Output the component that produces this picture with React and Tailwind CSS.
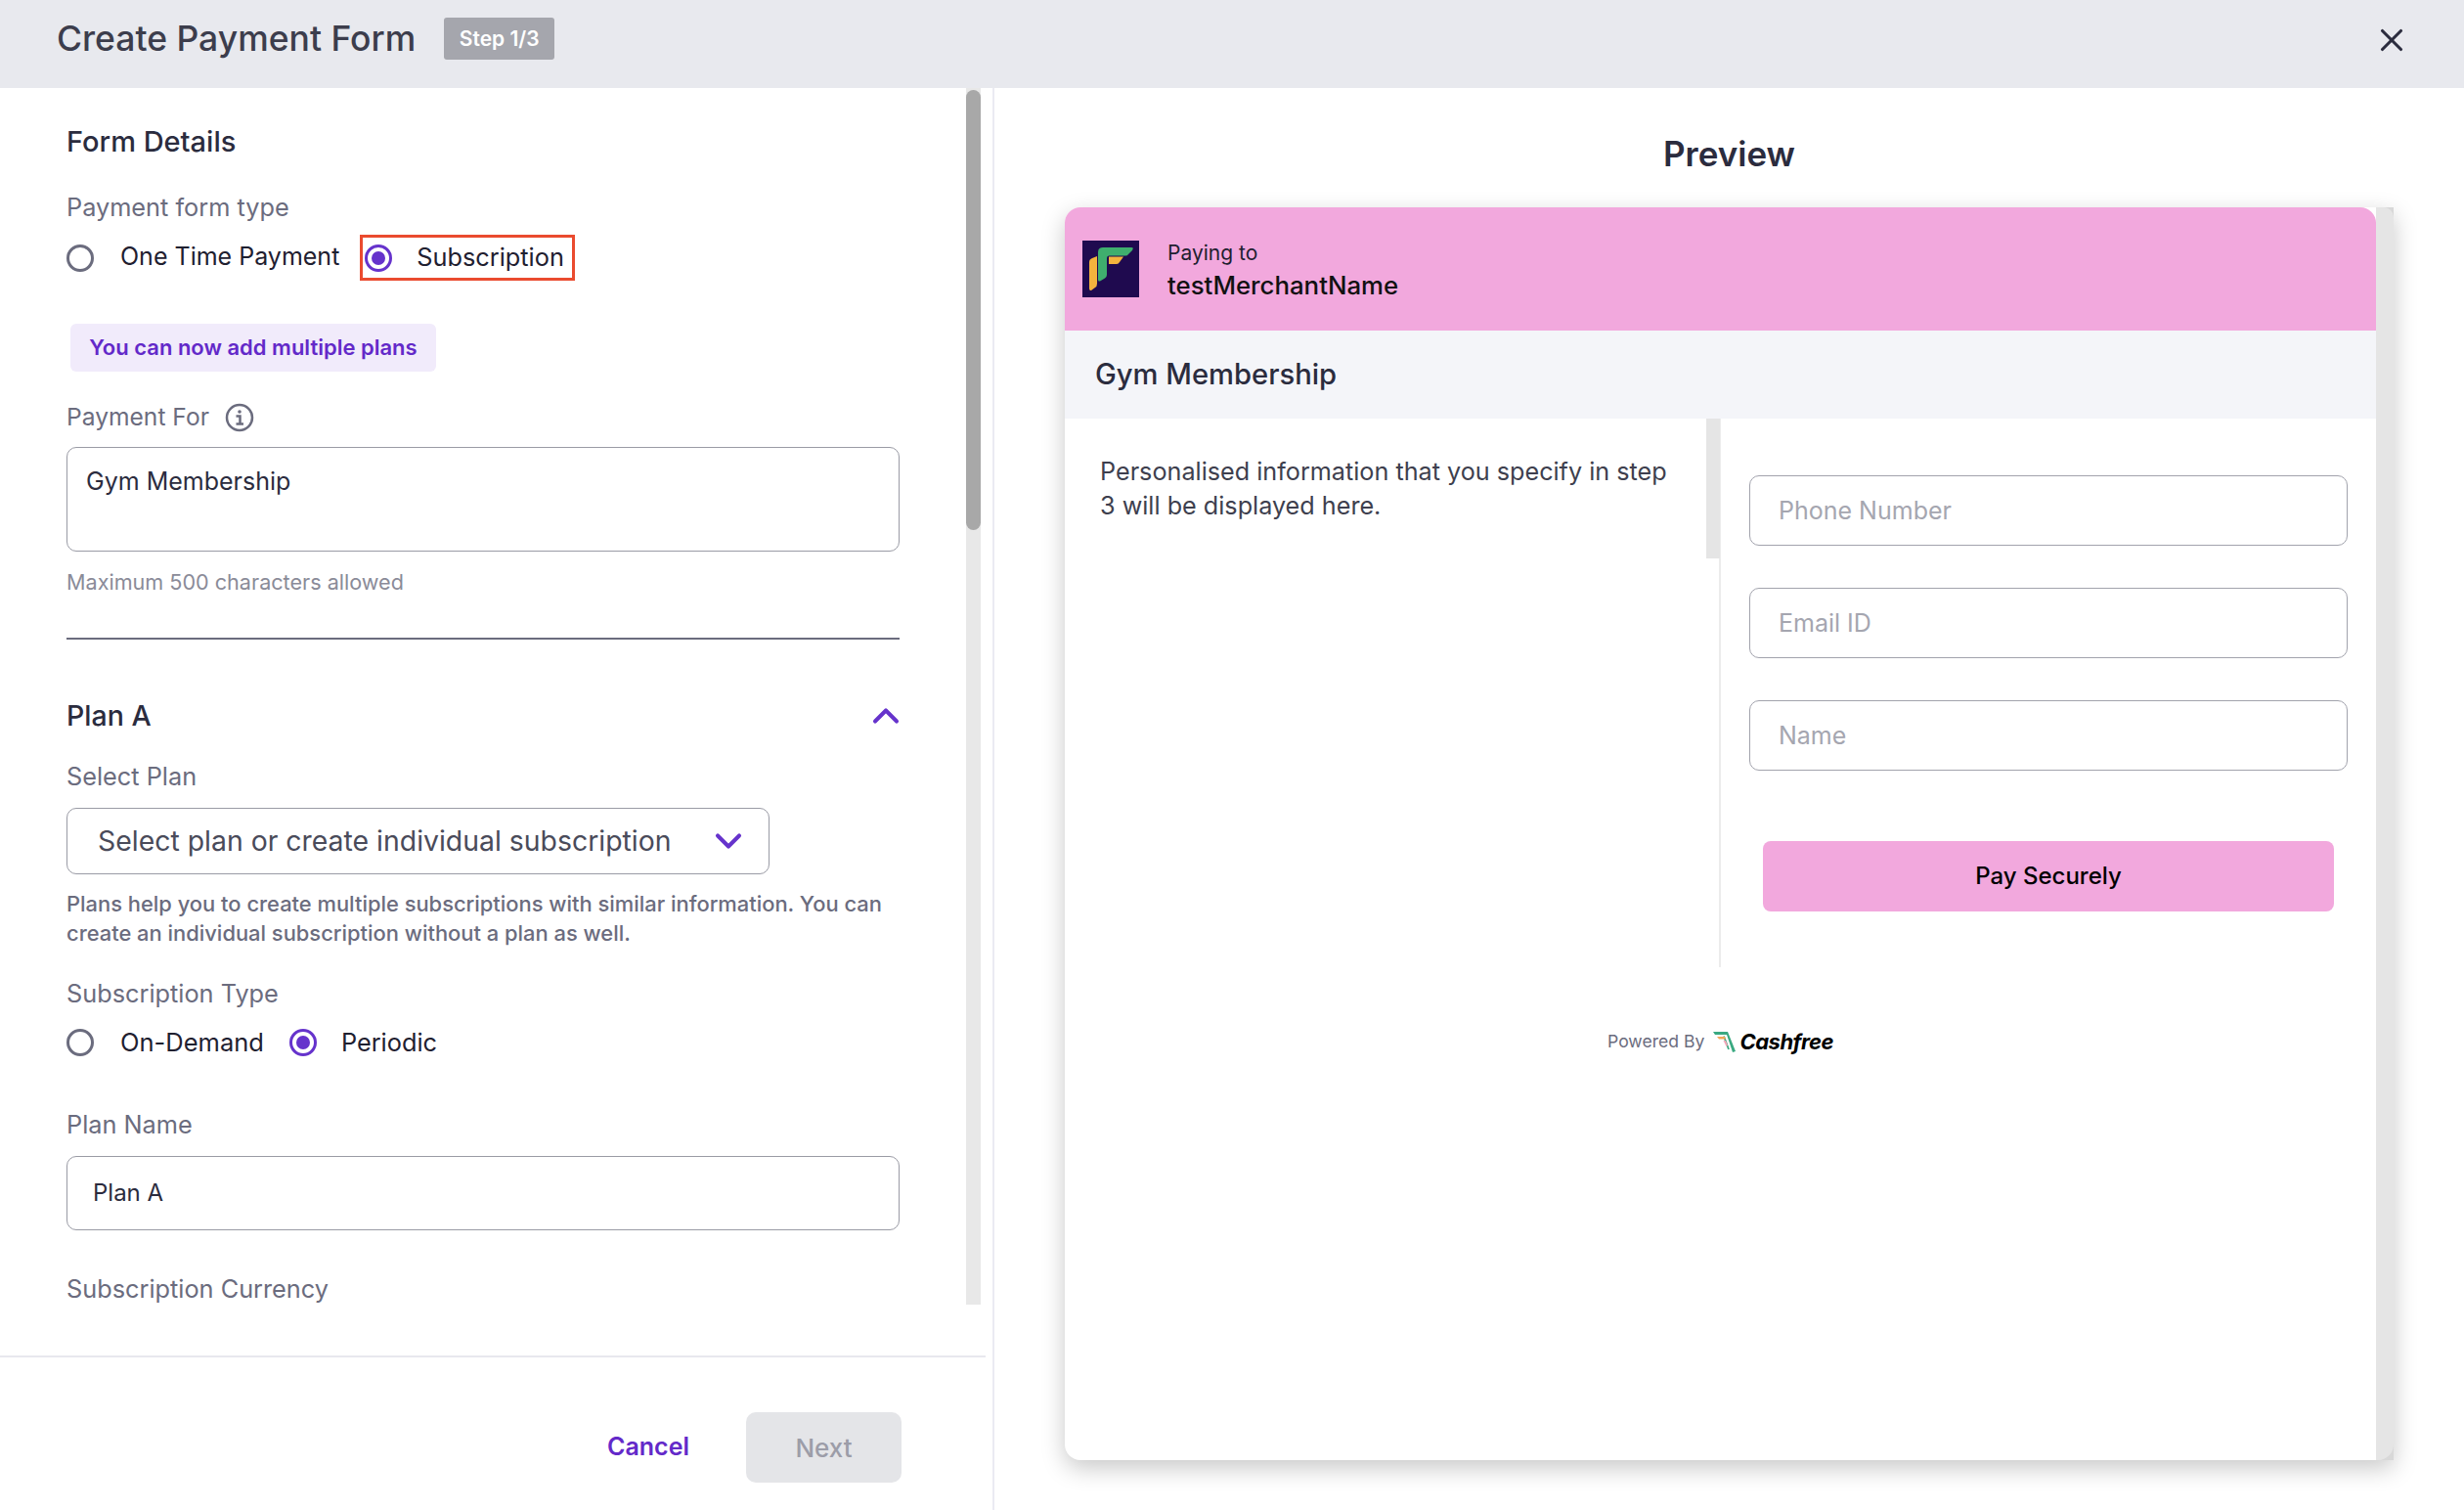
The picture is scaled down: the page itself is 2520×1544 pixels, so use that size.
import React from 'react';
import { X, ChevronUp, ChevronDown } from 'lucide-react';

const font = { fontFamily: 'Inter, "Liberation Sans", sans-serif' };

function Radio({ checked }) {
  if (checked) {
    return (
      <span className="flex h-[28px] w-[28px] shrink-0 items-center justify-center rounded-full border-[3px] border-[#6633cc]">
        <span className="h-[14px] w-[14px] rounded-full bg-[#6633cc]" />
      </span>
    );
  }
  return <span className="h-[28px] w-[28px] shrink-0 rounded-full border-[3px] border-[#6b6c7e]" />;
}

function Label({ className, children }) {
  return <div className={`h-[36px] text-[25.3px] leading-[36px] text-[#6b6c7e] ${className}`}>{children}</div>;
}

function PreviewInput({ placeholder }) {
  return (
    <div className="flex h-[72px] w-[612px] items-center rounded-[10px] border border-[#a2a3ad] pl-[29px] pt-[2px] text-[25px] text-[#a5a6b0]">
      {placeholder}
    </div>
  );
}

function MerchantLogo() {
  return (
    <svg width="58" height="58" viewBox="0 0 58 58" className="shrink-0">
      <rect width="58" height="58" fill="#1f0a4f" />
      <path d="M21 7H50Q53 7 51 10L47 14Q46 15.5 44 15.5H27Q25 15.5 25 18V35Q25 37 23 38.5L18 41.5Q16 42 16 40V12Q16 7 21 7Z" fill="#3fae6e" />
      <path d="M27 16.5H42L38 22Q37 24 35 24H27Z" fill="#f4b33d" />
      <path d="M15 16V44Q15 47 13 48L9 51Q7 51.5 7 49V22Q7 19 10 18Z" fill="#f4b33d" />
    </svg>
  );
}

function CashfreeIcon() {
  return (
    <svg width="24" height="21" viewBox="0 0 24 21" fill="none" className="shrink-0">
      <path d="M0 0H15L23 20L20 21L14 3H2Z" fill="#3aa981" />
      <path d="M11 4.5L16 18" stroke="#3aa981" strokeWidth="1.8" />
      <path d="M4 5H12L13 7.5H6Z" fill="#f2a65a" />
      <path d="M10.5 9H13L15 14L13.5 15Z" fill="#f4a6b8" />
    </svg>
  );
}

export default function App() {
  return (
    <div className="flex h-[1544px] w-[2520px] flex-col overflow-hidden bg-white" style={font}>
      <header className="flex h-[90px] shrink-0 items-start bg-[#e8e9ee] pl-[58px] pr-[55px]">
        <h1 className="mt-[18px] text-[35.5px] font-medium leading-[44px] text-[#3c3d4c]">Create Payment Form</h1>
        <span className="ml-[29px] mt-[18px] flex h-[43px] w-[113px] items-center justify-center rounded-[3px] bg-[#a5a6ad] text-[21px] font-semibold text-white">
          Step 1/3
        </span>
        <X className="ml-auto mt-[22px] text-[#2b2c3e]" size={38} strokeWidth={2} />
      </header>

      <div className="flex min-h-0 flex-1">
        <section className="flex w-[1017px] shrink-0 flex-col border-r-2 border-[#ebebf3]">
          <div className="flex h-[1296px] shrink-0 overflow-hidden pr-[12px]">
            <div className="w-[988px] shrink-0 pl-[68px] pr-[68px] pt-[35px]">
              <h2 className="h-[40px] text-[29px] font-medium leading-[40px] text-[#2b2c3e]">Form Details</h2>
              <Label className="mt-[29px]">Payment form type</Label>
              <div className="mt-[10px] flex h-[47px] items-center">
                <Radio />
                <span className="mb-[2px] ml-[27px] text-[25px] text-[#1f2030]">One Time Payment</span>
                <div className="ml-[21px] flex h-[47px] w-[220px] items-center border-[3px] border-[#ea4b2f] pl-[2px]">
                  <Radio checked />
                  <span className="mb-[2px] ml-[25px] text-[25.3px] text-[#1f2030]">Subscription</span>
                </div>
              </div>
              <div className="ml-[4px] mt-[44px] flex h-[49px] w-[374px] items-center justify-center rounded-[6px] bg-[#f1ebfb] text-[22px] font-semibold text-[#6329c9]">
                You can now add multiple plans
              </div>
              <div className="mt-[28px] flex h-[36px] items-center">
                <span className="text-[24.6px] text-[#6b6c7e]">Payment For</span>
                <svg width="30" height="30" viewBox="0 0 30 30" fill="none" className="ml-[16px] mt-[2px]">
                  <circle cx="15" cy="15" r="13" stroke="#6b6c7e" strokeWidth="2.5" />
                  <circle cx="15" cy="9" r="1.8" fill="#6b6c7e" />
                  <path d="M11.5 13.5H15.5V21M11.5 21.5H19" stroke="#6b6c7e" strokeWidth="2.5" />
                </svg>
              </div>
              <div className="mt-[13px] h-[107px] rounded-[10px] border border-[#9a9ba5] pl-[19px] pt-[19px] text-[25px] leading-[30px] text-[#2b2c3e]">
                Gym Membership
              </div>
              <div className="mt-[16px] h-[30px] text-[21.6px] leading-[30px] text-[#8a8b98]">Maximum 500 characters allowed</div>
              <div className="mt-[42px] h-[2px] bg-[#6b6c7e]" />
              <div className="mt-[58px] flex h-[40px] items-center justify-between">
                <h2 className="text-[28.5px] font-medium text-[#2b2c3e]">Plan A</h2>
                <ChevronUp className="-mr-[8px] text-[#6633cc]" size={44} strokeWidth={2.2} />
              </div>
              <Label className="mt-[24px]">Select Plan</Label>
              <div className="mt-[14px] flex h-[68px] w-[719px] items-center justify-between rounded-[10px] border border-[#9a9ba5] pl-[31px] pr-[19px] text-[28.4px] text-[#4a4b5a]">
                <span>Select plan or create individual subscription</span>
                <ChevronDown className="text-[#6633cc]" size={44} strokeWidth={2.2} />
              </div>
              <p className="mt-[15px] text-[21.9px] font-medium leading-[30px] text-[#6b6c7e]">
                Plans help you to create multiple subscriptions with similar information. You can
                <br />
                create an individual subscription without a plan as well.
              </p>
              <Label className="mt-[29px]">Subscription Type</Label>
              <div className="mt-[14px] flex h-[36px] items-center">
                <Radio />
                <span className="ml-[27px] text-[25.5px] text-[#1f2030]">On-Demand</span>
                <span className="ml-[26px]"><Radio checked /></span>
                <span className="ml-[25px] text-[25.3px] text-[#1f2030]">Periodic</span>
              </div>
              <Label className="mt-[48px]">Plan Name</Label>
              <div className="mt-[14px] flex h-[76px] items-center rounded-[10px] border border-[#9a9ba5] pl-[26px] text-[24px] text-[#2b2c3e]">
                Plan A
              </div>
              <Label className="mt-[42px]">Subscription Currency</Label>
            </div>
            <div className="h-[1244px] w-[15px] shrink-0 bg-[#e8e8e8]">
              <div className="mt-[2px] h-[450px] w-[15px] rounded-full bg-[#a8a8a8]" />
            </div>
          </div>
          <footer className="mr-[7px] flex flex-1 items-start justify-end border-t-2 border-[#e8e8ee] pr-[86px] pt-[56px]">
            <button className="mr-[58px] h-[72px] text-[25px] font-semibold text-[#6329c9]">Cancel</button>
            <button className="h-[72px] w-[159px] rounded-[10px] bg-[#e4e5e8] text-[26px] font-medium text-[#9c9da8]">Next</button>
          </footer>
        </section>

        <section className="min-w-0 flex-1 pl-[72px] pt-[44px]">
          <h2 className="h-[46px] w-[1359px] text-center text-[35px] font-semibold leading-[46px] text-[#2b2c3e]">Preview</h2>
          <div className="mt-[32px] flex h-[1281px] w-[1359px] rounded-l-[16px] bg-white shadow-[0_8px_24px_rgba(0,0,0,0.22)]">
            <div className="w-[1341px] shrink-0 overflow-hidden rounded-t-[16px]">
              <div className="flex h-[126px] items-center bg-[#f2a8dd] pl-[18px]">
                <MerchantLogo />
                <div className="ml-[29px]">
                  <div className="h-[34px] text-[21px] leading-[34px] text-[#1f2030]">Paying to</div>
                  <div className="text-[25.8px] font-medium leading-[32px] text-[#111]">testMerchantName</div>
                </div>
              </div>
              <div className="flex h-[90px] items-center bg-[#f4f5f9] pl-[31px] text-[29.2px] font-medium text-[#2b2c3e]">
                Gym Membership
              </div>
              <div className="flex">
                <div className="flex h-[561px] w-[671px] shrink-0 border-r-2 border-[#ececec]">
                  <p className="w-[656px] shrink-0 pl-[36px] pt-[37px] text-[25.2px] leading-[35px] text-[#3e3f4e]">
                    Personalised information that you specify in step
                    <br />
                    3 will be displayed here.
                  </p>
                  <div className="h-[143px] w-[14px] shrink-0 bg-[#e5e5e5]" />
                </div>
                <div className="pl-[29px] pt-[58px]">
                  <div className="flex flex-col gap-[43px]">
                    <PreviewInput placeholder="Phone Number" />
                    <PreviewInput placeholder="Email ID" />
                    <PreviewInput placeholder="Name" />
                  </div>
                  <button className="ml-[14px] mt-[72px] h-[72px] w-[584px] rounded-[8px] bg-[#f2a8dd] text-[24px] font-medium text-black">
                    Pay Securely
                  </button>
                </div>
              </div>
              <div className="mt-[61px] flex h-[30px] items-center justify-center">
                <span className="text-[17.6px] text-[#6b6c7e]">Powered By</span>
                <span className="ml-[9px]"><CashfreeIcon /></span>
                <span className="ml-[3px] text-[22px] font-bold italic tracking-[-0.5px] text-black">Cashfree</span>
              </div>
            </div>
            <div className="w-[18px] shrink-0 bg-[#d8d8d8]">
              <div className="h-full rounded-tr-[10px] rounded-br-[16px] bg-[#e5e5e5]" />
            </div>
          </div>
        </section>
      </div>
    </div>
  );
}
